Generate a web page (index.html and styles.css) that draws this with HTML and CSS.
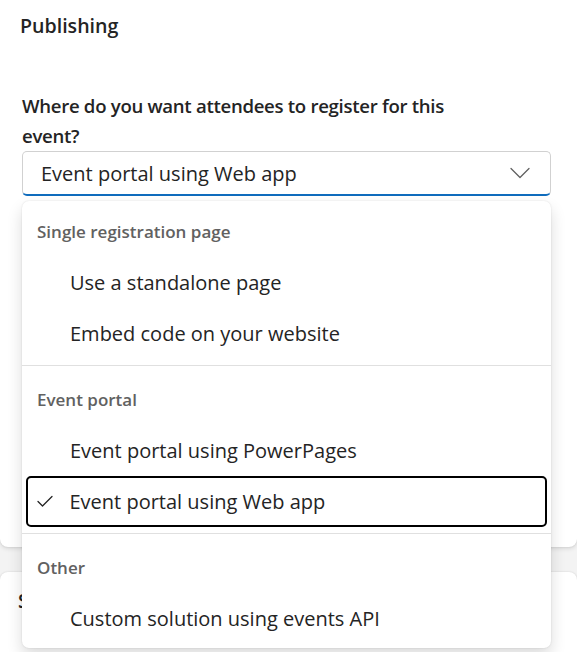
FILE: index.html
```html
<!DOCTYPE html>
<html lang="en">
<head>
<meta charset="utf-8">
<title>Publishing</title>
<link rel="stylesheet" href="styles.css">
</head>
<body>
<main class="page">
  <section class="card card-publishing">
    <h2 class="card-title">Publishing</h2>
    <div class="field">
      <label class="field-label" for="reg-trigger">Where do you want attendees to register for this event?</label>
      <div class="dropdown">
        <button class="dropdown-trigger" id="reg-trigger" type="button">
          <span class="dropdown-value">Event portal using Web app</span>
          <svg class="chevron" width="20" height="20" viewBox="0 0 20 20" aria-hidden="true"><path d="M1 5.5 L10 14.5 L19 5.5" fill="none" stroke="#616161" stroke-width="1.3" stroke-linecap="round" stroke-linejoin="round"/></svg>
        </button>
        <div class="listbox" role="listbox">
          <div class="group-header">Single registration page</div>
          <div class="option" role="option">Use a standalone page</div>
          <div class="option" role="option">Embed code on your website</div>
          <div class="divider"></div>
          <div class="group-header">Event portal</div>
          <div class="option" role="option">Event portal using PowerPages</div>
          <div class="option option-selected" role="option" aria-selected="true">
            <svg class="check" width="16" height="16" viewBox="0 0 16 16" aria-hidden="true"><path d="M1 8.5 L5.5 13 L15 3.5" fill="none" stroke="#242424" stroke-width="1.3" stroke-linecap="round" stroke-linejoin="round"/></svg>
            Event portal using Web app
          </div>
          <div class="divider"></div>
          <div class="group-header">Other</div>
          <div class="option" role="option">Custom solution using events API</div>
        </div>
      </div>
    </div>
  </section>
  <section class="card card-next">
    <h2 class="card-title">Speakers</h2>
  </section>
</main>
</body>
</html>
```

FILE: styles.css
```css
* { box-sizing: border-box; }

body {
  margin: 0;
  background: #f3f3f3;
  font-family: "Open Sans", "Noto Sans", sans-serif;
  color: #242424;
  overflow: hidden;
}

.page {
  display: flex;
  flex-direction: column;
  gap: 25px;
}

.card {
  background: #ffffff;
  border-radius: 8px;
  box-shadow: 0 0 2px rgba(0,0,0,0.12), 0 2px 4px rgba(0,0,0,0.10);
}

.card-publishing {
  border-radius: 0 0 8px 8px;
  height: 547px;
  padding: 11px 26px 0 20px;
}

.card-title {
  margin: 0;
  font-size: 19.6px;
  font-weight: 600;
  line-height: 30px;
}

.field {
  margin-top: 50px;
  padding-left: 2px;
}

.field-label {
  display: block;
  max-width: 440px;
  font-size: 18.6px;
  letter-spacing: -0.3px;
  font-weight: 600;
  line-height: 30px;
}

.dropdown {
  position: relative;
  margin-top: 0;
}

.dropdown-trigger {
  width: 100%;
  height: 45px;
  display: flex;
  align-items: center;
  justify-content: space-between;
  padding: 0 20px 0 18px;
  background: #ffffff;
  border: 1px solid #d1d1d1;
  border-bottom: 2px solid #0f6cbd;
  border-radius: 5px;
  font: inherit;
  font-size: 20px;
  color: #242424;
  text-align: left;
}

.chevron { flex: none; }

.listbox {
  position: absolute;
  top: 50px;
  left: 0;
  width: 100%;
  padding: 4px;
  background: #ffffff;
  border-radius: 7px;
  box-shadow: 0 0 2px rgba(0,0,0,0.12), 0 8px 16px rgba(0,0,0,0.14);
  z-index: 2;
}

.group-header {
  height: 52px;
  display: flex;
  align-items: center;
  padding-left: 11px;
  font-size: 17px;
  font-weight: 600;
  color: #616161;
}

.option {
  height: 51px;
  display: flex;
  align-items: center;
  padding-left: 44px;
  font-size: 20px;
  color: #242424;
  position: relative;
  border-radius: 5px;
}

.option-selected {
  border: 2.5px solid #000000;
  padding-left: 41.5px;
}

.check {
  position: absolute;
  left: 9px;
  top: 50%;
  margin-top: -9px;
}

.divider {
  height: 1px;
  background: #e0e0e0;
  margin: 6px -4px 7px;
}

.card-next {
  height: 120px;
  padding: 14px 20px;
}

.card-next .card-title {
  margin-left: -2px;
}
```
